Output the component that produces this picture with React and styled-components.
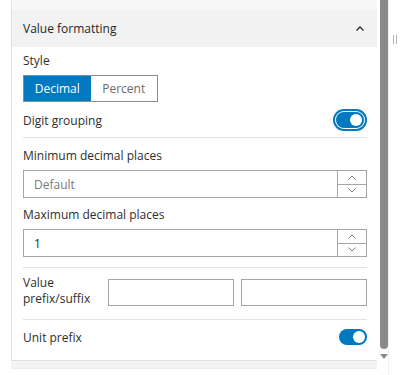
import React from "react";
import styled, { createGlobalStyle } from "styled-components";

const Global = createGlobalStyle`
  html, body { margin: 0; padding: 0; background: #ffffff; }
  body { font-family: "Open Sans", "Noto Sans", sans-serif; font-size: 12px; color: #2e2e2e; }
  * { box-sizing: border-box; }
`;

const Page = styled.div`
  display: flex;
  width: 400px;
  height: 375px;
  background: #fff;
`;

const Gutter = styled.div`
  width: 11px;
  flex: none;
`;

const PanelColumn = styled.div`
  width: 366px;
  flex: none;
  display: flex;
  flex-direction: column;
`;

const TopStrip = styled.div`
  height: 10px;
  background: #f7f7f7;
  border-left: 1px solid #e4e4e4;
`;

const Panel = styled.section`
  border-left: 1px solid #e0e0e0;
  display: flex;
  flex-direction: column;
`;

const Header = styled.div`
  height: 37px;
  background: #f2f2f2;
  display: flex;
  align-items: center;
  justify-content: space-between;
  padding: 0 13px 0 11px;
  font-size: 12px;
  color: #262626;
`;

const Body = styled.div`
  padding: 6px 10px 15px 11px;
  display: flex;
  flex-direction: column;
`;

const Label = styled.div`
  line-height: 16px;
  margin-top: ${(p) => p.$mt || 0}px;
`;

const Segmented = styled.div`
  display: flex;
  width: 135px;
  height: 27px;
  margin-top: 6px;
  border: 1px solid #8c8c8c;
`;

const SegButton = styled.div`
  flex: 1;
  display: flex;
  align-items: center;
  justify-content: center;
  font-size: 12px;
  background: ${(p) => (p.$active ? "#0079c1" : "#ffffff")};
  color: ${(p) => (p.$active ? "#ffffff" : "#6a6a6a")};
`;

const Row = styled.div`
  display: flex;
  align-items: center;
  justify-content: space-between;
  height: ${(p) => p.$h}px;
  margin-top: ${(p) => p.$mt}px;
`;

const Divider = styled.div`
  height: 1px;
  background: #e3e3e3;
  margin-top: ${(p) => p.$mt}px;
`;

const Track = styled.div`
  width: 28px;
  height: 16px;
  border-radius: 8px;
  background: #0079c1;
  display: flex;
  align-items: center;
  justify-content: flex-end;
  padding-right: 2px;
  margin-right: ${(p) => (p.$focus ? 3 : 0)}px;
  box-shadow: ${(p) =>
    p.$focus ? "0 0 0 1px #ffffff, 0 0 0 3px #0079c1" : "none"};
`;

const Knob = styled.div`
  width: 12px;
  height: 12px;
  border-radius: 50%;
  background: #ffffff;
`;

const NumberBox = styled.div`
  display: flex;
  height: 28px;
  margin-top: 6px;
  border: 1px solid #a6a6a6;
`;

const NumberText = styled.div`
  flex: 1;
  display: flex;
  align-items: center;
  padding-left: 10px;
  font-size: 12px;
  color: ${(p) => (p.$placeholder ? "#7a7a7a" : "#2b2b2b")};
`;

const Spinner = styled.div`
  width: 29px;
  border-left: 1px solid #a6a6a6;
  display: flex;
  flex-direction: column;
`;

const SpinBtn = styled.div`
  flex: 1;
  display: flex;
  align-items: center;
  justify-content: center;
  border-top: ${(p) => (p.$down ? "1px solid #a6a6a6" : "none")};
`;

const PrefixRow = styled.div`
  display: grid;
  grid-template-columns: 78px 126px 126px;
  column-gap: 7px;
  align-items: center;
  margin-top: 10px;
`;

const PrefixLabel = styled.div`
  line-height: 16px;
  margin-top: -3px;
`;

const TextBox = styled.div`
  height: 27px;
  border: 1px solid #a6a6a6;
  background: #fff;
`;

const Footer = styled.div`
  height: 9px;
  background: #f3f3f3;
  border-top: 1px solid #dedede;
  border-bottom: 1px solid #ececec;
`;

const Gap = styled.div`
  width: 3px;
  flex: none;
`;

const ScrollTrack = styled.div`
  width: 8px;
  flex: none;
  display: flex;
  flex-direction: column;
  align-items: center;
`;

const Thumb = styled.div`
  width: 8px;
  height: 349px;
  background: #8a8a8a;
  border-radius: 0 0 4px 4px;
`;

const Arrow = styled.div`
  margin-top: 5px;
  width: 0;
  height: 0;
  border-left: 4px solid transparent;
  border-right: 4px solid transparent;
  border-top: 5px solid #8a8a8a;
`;

const Side = styled.div`
  flex: 1;
  border-left: 1px solid #f0f0f0;
  display: flex;
  justify-content: center;
  padding-top: 35px;
`;

const Grip = styled.div`
  width: 4px;
  height: 9px;
  margin-left: 1px;
  border-left: 1px solid #b0b0b0;
  border-right: 1px solid #b0b0b0;
`;

const Chevron = ({ up, color = "#7a7a7a", w = 8, h = 5, sw = 1 }) => (
  <svg width={w} height={h} viewBox="0 0 8 5" style={{ display: "block" }}>
    <polyline
      points={up ? "0.5,4.5 4,1 7.5,4.5" : "0.5,0.5 4,4 7.5,0.5"}
      fill="none"
      stroke={color}
      strokeWidth={sw}
    />
  </svg>
);

const Toggle = ({ focus }) => (
  <Track $focus={focus}>
    <Knob />
  </Track>
);

const NumberInput = ({ value, placeholder }) => (
  <NumberBox>
    <NumberText $placeholder={!value}>{value || placeholder}</NumberText>
    <Spinner>
      <SpinBtn>
        <Chevron up />
      </SpinBtn>
      <SpinBtn $down>
        <Chevron />
      </SpinBtn>
    </Spinner>
  </NumberBox>
);

export default function App() {
  return (
    <>
      <Global />
      <Page>
        <Gutter />
        <PanelColumn>
          <TopStrip />
          <Panel>
            <Header>
              <span>Value formatting</span>
              <Chevron up color="#2b2b2b" sw={1.3} />
            </Header>
            <Body>
              <Label>Style</Label>
              <Segmented>
                <SegButton $active>Decimal</SegButton>
                <SegButton>Percent</SegButton>
              </Segmented>
              <Row $h={22} $mt={7}>
                <span>Digit grouping</span>
                <Toggle focus />
              </Row>
              <Divider $mt={6} />
              <Label $mt={10}>Minimum decimal places</Label>
              <NumberInput placeholder="Default" />
              <Label $mt={9}>Maximum decimal places</Label>
              <NumberInput value="1" />
              <Divider $mt={10} />
              <PrefixRow>
                <PrefixLabel>
                  Value
                  <br />
                  prefix/suffix
                </PrefixLabel>
                <TextBox />
                <TextBox />
              </PrefixRow>
              <Divider $mt={12} />
              <Row $h={16} $mt={9}>
                <span>Unit prefix</span>
                <Toggle />
              </Row>
            </Body>
          </Panel>
          <Footer />
        </PanelColumn>
        <Gap />
        <ScrollTrack>
          <Thumb />
          <Arrow />
        </ScrollTrack>
        <Side>
          <Grip />
        </Side>
      </Page>
    </>
  );
}
